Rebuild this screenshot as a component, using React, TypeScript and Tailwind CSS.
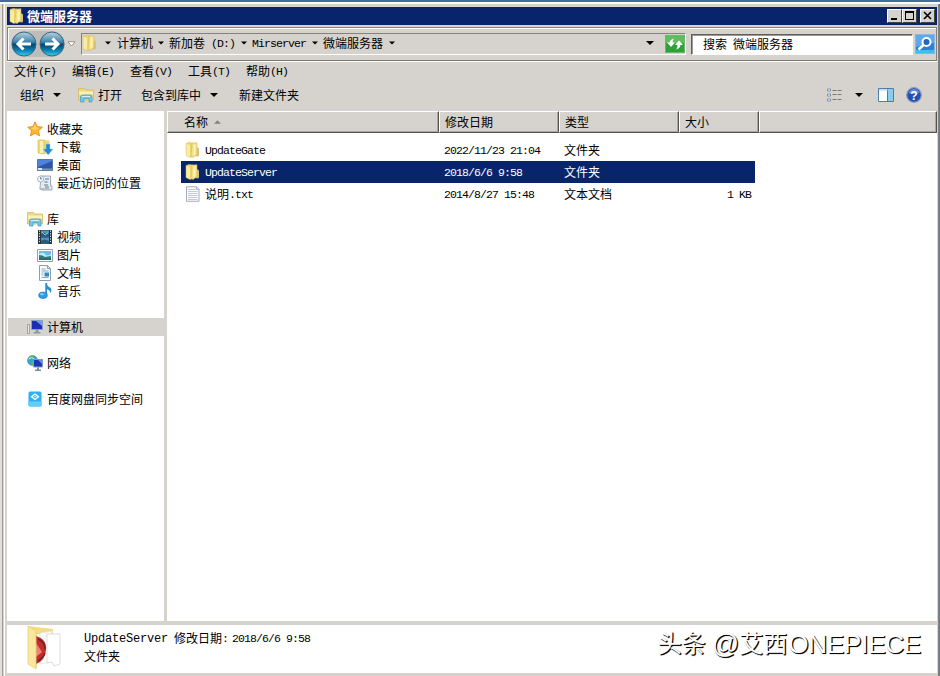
import { ReactNode } from "react";

// CJK glyphs sit on a 12px cell, latin ones on a 6px cell (7px when wide)
function T({ children, className = "", wide = false }: { children: string; className?: string; wide?: boolean }) {
  const parts = children.split(/([\x20-\x7e]+)/).filter(Boolean);
  return (
    <span className={"inline-flex items-center whitespace-pre leading-none " + className}>
      {parts.map((p, i) =>
        /^[\x20-\x7e]/.test(p) ? (
          <span key={i} className={"pt-[2px] font-['Liberation_Mono',monospace] leading-[12px] " + (wide ? "text-[12px] tracking-[-0.2px]" : "text-[11.5px] tracking-[-0.9px]")}>{p}</span>
        ) : (
          <span key={i} className="font-['Noto_Sans_CJK_SC',sans-serif] text-[12px] leading-[12px]">{p}</span>
        )
      )}
    </span>
  );
}

function Caret({ className = "", size = 7 }: { className?: string; size?: number }) {
  return (
    <svg width={size} height="4" viewBox="0 0 8 4" className={"shrink-0 " + className}>
      <path d="M0 0h8L4 4z" fill="currentColor" />
    </svg>
  );
}

const svg = (children: ReactNode, size = 16) => (
  <svg width={size} height={size} viewBox="0 0 16 16" className="shrink-0">{children}</svg>
);

const FolderIcon = () =>
  svg(
    <>
      <path d="M1 1.500L4 .5l4 .5v13.500l-3 1-4-2z" fill="#ecd46f" stroke="#dcc169" strokeWidth=".5" />
      <path d="M1.500 2L5 3v12l-3.500-1.500z" fill="#f9eda6" />
      <path d="M7 1l5-.3v12L8 15.500 6 14.500z" fill="#f2df80" stroke="#d3b755" strokeWidth=".5" />
      <path d="M8.500 2.500h2v10l-2 1.500z" fill="#fbf3b9" />
      <path d="M12 5l2 1.500v7l-1 1-3-.5 2-2z" fill="#d8c07a" />
    </>
  );

const LibraryIcon = () =>
  svg(
    <>
      <path d="M.5 3V1.500h6L8 3h7.500v10H.5z" fill="#eed980" stroke="#cdb561" strokeWidth=".7" />
      <path d="M1 4.500h14v3H1z" fill="#fcf2b8" />
      <path d="M2.500 15V9.500Q3 8 5 8h7q2 0 2 2v5h-3v-3.500H6V15z" fill="#73c6ea" stroke="#3f9ec8" strokeWidth=".7" />
      <path d="M4 9.500h8" stroke="#d1f1fc" />
    </>
  );

const StarIcon = () =>
  svg(
    <>
      <path d="M8 .8l2.200 4.800 5.200.6-3.900 3.500 1 5.200L8 12.300l-4.600 2.600 1.100-5.200L.7 6.200l5.100-.6z" fill="#ffb52e" stroke="#e88a2a" strokeWidth=".9" />
      <path d="M8 3l1.500 3.500 3 .5-4.500 2-4.500-2 3-.5z" fill="#ffd56a" />
    </>
  );

const DownloadIcon = () =>
  svg(
    <>
      <path d="M1 1h7v14l-7-1z" fill="#f0d97a" stroke="#d3b755" strokeWidth=".6" />
      <path d="M3 2h3v12H3z" fill="#fbf1b0" />
      <path d="M8 1.500h4.500V13H8z" fill="#ead584" />
      <path d="M9 5h4v5h3l-4.800 6L6 10h3z" fill="#2488cf" stroke="#9bd0f2" strokeWidth=".5" />
    </>
  );

const DesktopIcon = () =>
  svg(
    <>
      <path d="M.5 2.500h15v11H.5z" fill="#2b55b0" stroke="#5f7795" />
      <path d="M1 3h14v1L1 10z" fill="#4f83d8" />
      <path d="M1 11.500h14V13H1z" fill="#7f99b3" />
      <path d="M1 11h4v2H1z" fill="#d6edf5" />
    </>
  );

const RecentIcon = () =>
  svg(
    <>
      <path d="M4 1h9.500v10H15v4H4.500L3 13z" fill="#e3ebf2" stroke="#8798a6" strokeWidth=".8" />
      <path d="M8 4h4M7 10h4M8 12h4" stroke="#66798b" />
      <path d="M7.500 6h3v2h-3z" fill="#9aacbd" />
      <circle cx="3.600" cy="4" r="3.100" fill="#f4f7fa" stroke="#98a6b3" strokeWidth=".8" />
      <path d="M3.600 2v2H5" fill="none" stroke="#536879" strokeWidth=".8" />
      <path d="M2 13h10l1 2H3z" fill="#b2bcc5" />
    </>
  );

const VideoIcon = () =>
  svg(
    <>
      <path d="M1 1h14v14H1z" fill="#26343e" />
      <path d="M4 1.500h8v6H4zM4 8.500h8v6H4z" fill="#4a98cf" />
      <path d="M4 5q3-3 5 0l3-1v3.500H4zM4 12q3-3 8 0v2.500H4z" fill="#245c7c" />
      <path d="M5 3l3 3 3-2" stroke="#a8c7a0" fill="none" />
      <path d="M2.500 1.500v13M13.500 1.500v13" stroke="#dce5eb" strokeDasharray="1.300 1.300" />
    </>
  );

const PictureIcon = () =>
  svg(
    <>
      <path d="M.5 2.500h15v12H.5z" fill="#fff" stroke="#8ca1b1" />
      <path d="M2 4h12v9H2z" fill="#67bce7" />
      <path d="M2 7q4-3 6 0t6 0v3H2z" fill="#c4ebec" />
      <path d="M2 8q4 0 6 2l6-1v3.500H2z" fill="#287d83" />
      <path d="M2 11.500h12V13H2z" fill="#1d62a5" />
    </>
  );

const DocIcon = () =>
  svg(
    <>
      <path d="M2.500.5h8l3 3v12h-11z" fill="#f8fbfe" stroke="#8b9caf" />
      <path d="M10.500.5v3h3" fill="none" stroke="#8b9caf" />
      <path d="M4.500 4h4M4.500 6h7M4.500 8h2M4.500 10h2M4.500 12.500h7" stroke="#8fa7bd" />
      <path d="M7.500 7.500h4.500v4H7.500z" fill="#3587bd" />
    </>
  );

const MusicIcon = () =>
  svg(
    <>
      <path d="M8.300 0h1.700q0 3 3 4.500 2.500 1.800.5 5.500-.5-3-3.500-3.700V12H8.300z" fill="#278fd5" />
      <ellipse cx="6" cy="12.300" rx="4.300" ry="3.200" fill="#2f9be0" stroke="#1876b5" strokeWidth=".6" />
      <ellipse cx="5" cy="11.300" rx="2" ry="1" fill="#8dd0f5" />
    </>
  );

const ComputerIcon = () =>
  svg(
    <>
      <path d="M.5 5.500h2v9h-2z" fill="#e5e7e8" stroke="#8d9499" strokeWidth=".8" />
      <path d="M4.500 1.500h11v9h-11z" fill="#1c2fb4" stroke="#8ba0be" />
      <path d="M9 2h6v5z" fill="#6e9bf1" />
      <path d="M8.500 11h3v2h2v1.500h-7V13h2z" fill="#8a97a5" />
    </>
  );

const NetworkIcon = () =>
  svg(
    <>
      <circle cx="5.500" cy="5.500" r="5" fill="#36a1cf" stroke="#237aa3" strokeWidth=".5" />
      <path d="M2 2q3-2 5-1L5 4 2 6zM4 7h3v3L5 10z" fill="#5cb957" />
      <path d="M1.500 4q3-3 6 0" stroke="#c4efff" fill="none" />
      <path d="M6.500 4.500h9v7.500h-9z" fill="#1c35b5" stroke="#819bbd" />
      <path d="M11 5h4v4z" fill="#638ceb" />
      <path d="M10 12.500h2v2h2V16H8v-1.500h2z" fill="#7f8c9a" />
    </>
  );

const BaiduIcon = () =>
  svg(
    <>
      <rect x="1.500" y=".5" width="13" height="15" rx="1.500" fill="#2fb0f1" />
      <path d="M1.500 10.500h13V14q0 1.500-1.500 1.500H3q-1.500 0-1.500-1.500z" fill="#62cdf8" />
      <path d="M8 3l3.500 2.700L8 8.500 4.500 5.700z" fill="none" stroke="#fff" strokeWidth="1.300" />
      <path d="M6.800 5.700h2.400" stroke="#d2f2ff" />
    </>
  );

const TextFileIcon = () =>
  svg(
    <>
      <path d="M1.500.8h10l2.500 2.500v12H1.500z" fill="#fafbfd" stroke="#9ba1b3" strokeWidth=".9" />
      <path d="M3 3.500h8M3 5.500h9.500M3 7.500h9.500M3 9.500h9.500M3 11.500h9.500M3 13.500h9.500" stroke="#b4bdd0" strokeWidth=".8" />
      <path d="M11.500.8v2.500H14" fill="none" stroke="#9ba1b3" strokeWidth=".8" />
    </>
  );

function NavButton({ flip = false }: { flip?: boolean }) {
  return (
    <svg width="26" height="26" viewBox="0 0 26 26" className={"shrink-0 " + (flip ? "-scale-x-100" : "")}>
      <defs>
        <linearGradient id="orb" x2="0" y2="1">
          <stop offset="0" stopColor="#b9d2de" />
          <stop offset=".42" stopColor="#3c86ac" />
          <stop offset=".52" stopColor="#06476f" />
          <stop offset=".75" stopColor="#087db0" />
          <stop offset="1" stopColor="#37d2f5" />
        </linearGradient>
      </defs>
      <circle cx="13" cy="13" r="12" fill="url(#orb)" stroke="#3d6580" strokeWidth="1" />
      <path d="M12.500 7.500L7 13l5.500 5.500M7.500 13H20" fill="none" stroke="#fff" strokeWidth="3" />
    </svg>
  );
}

const tree = [
  { label: "收藏夹", icon: StarIcon, root: true },
  { label: "下载", icon: DownloadIcon },
  { label: "桌面", icon: DesktopIcon },
  { label: "最近访问的位置", icon: RecentIcon },
  null,
  { label: "库", icon: LibraryIcon, root: true },
  { label: "视频", icon: VideoIcon },
  { label: "图片", icon: PictureIcon },
  { label: "文档", icon: DocIcon },
  { label: "音乐", icon: MusicIcon },
  null,
  { label: "计算机", icon: ComputerIcon, root: true, active: true },
  null,
  { label: "网络", icon: NetworkIcon, root: true },
  null,
  { label: "百度网盘同步空间", icon: BaiduIcon, root: true },
];

const files = [
  { name: "UpdateGate", date: "2022/11/23 21:04", type: "文件夹", size: "", icon: FolderIcon },
  { name: "UpdateServer", date: "2018/6/6 9:58", type: "文件夹", size: "", icon: FolderIcon, selected: true },
  { name: "说明.txt", date: "2014/8/27 15:48", type: "文本文档", size: "1 KB", icon: TextFileIcon },
];

const columns = [
  { label: "名称", cls: "w-[272px] pl-[16px]", sorted: true },
  { label: "修改日期", cls: "w-[120px] pl-[5px]" },
  { label: "类型", cls: "w-[120px] pl-[5px]" },
  { label: "大小", cls: "w-[80px] pl-[5px]" },
  { label: "", cls: "flex-1" },
];

const menus = ["文件(F)", "编辑(E)", "查看(V)", "工具(T)", "帮助(H)"];

const captionBtn = "flex h-[14px] w-[15px] items-center justify-center border border-t-white border-l-white border-r-[#404040] border-b-[#404040] bg-[#d6d3ce] text-black";

function TitleBar() {
  return (
    <div className="flex h-[18px] items-center bg-[#08246b] pl-[2px] pr-[2px]">
      <FolderIcon />
      <T className="ml-[2px] flex-1 font-bold text-white [&>span]:text-[13px]">微端服务器</T>
      <div className={captionBtn}>
        <svg width="11" height="10"><path d="M2 7h6v2H2z" /></svg>
      </div>
      <div className={captionBtn + " mr-[3px]"}>
        <svg width="11" height="10"><path d="M1 0h9v9H1zM2 2v6h7V2z" fillRule="evenodd" /></svg>
      </div>
      <div className={captionBtn}>
        <svg width="11" height="10"><path d="M2 1l7 7M9 1L2 8" stroke="#000" strokeWidth="1.600" /></svg>
      </div>
    </div>
  );
}

function AddressRow() {
  return (
    <div className="mt-[2px] flex h-[34px] items-center border border-[#85827e] border-b-[#77746f] pl-[3px] shadow-[inset_1px_1px_0_#fff,0_1px_0_#fff]">
      <div className="flex gap-[2px] rounded-full bg-[#bebcb8]">
        <NavButton />
        <NavButton flip />
      </div>
      <svg width="9" height="6" viewBox="0 0 9 6" className="ml-[2px] shrink-0">
        <path d="M1 .7h7L4.500 5z" fill="#fff" stroke="#85827e" strokeWidth=".8" />
      </svg>
      <div className="ml-[5px] flex h-[22px] w-[605px] items-center border border-t-[#85827e] border-l-[#85827e] border-r-white border-b-white pb-[2px] text-black">
        <FolderIcon />
        <Caret size={6} className="ml-[7px] mr-[6px]" />
        <T>计算机</T>
        <Caret size={6} className="ml-[5px] mr-[5px]" />
        <T>新加卷 (D:)</T>
        <Caret size={6} className="ml-[6px] mr-[5px]" />
        <T>Mirserver</T>
        <Caret size={6} className="ml-[6px] mr-[5px]" />
        <T>微端服务器</T>
        <Caret size={6} className="ml-[6px]" />
        <div className="flex-1" />
        <Caret size={8} className="mr-[11px]" />
        <svg width="20" height="18" viewBox="0 0 20 18" className="mt-[2px] shrink-0">
          <rect x=".5" y=".5" width="19" height="17" fill="#2ea239" stroke="#6ab86d" />
          <path d="M1 1h18v7H1z" fill="#5fbd61" />
          <path d="M2 7.500h2.500Q5 4.500 9 3.500 7.500 5 7.500 7.500H10L6 12z" fill="#fff" />
          <path d="M18 10h-2.500q-.5 3.500-4.500 4.500 1.500-1.500 1.500-4.500H10L14 5.500z" fill="#fff" />
        </svg>
      </div>
      <div className="ml-[5px] flex h-[21px] w-[222px] items-center border border-t-[#625f5b] border-l-[#625f5b] border-r-white border-b-white bg-white pl-[11px] shadow-[inset_1px_1px_0_#999]">
        <T>搜索 微端服务器</T>
      </div>
      <svg width="20" height="20" viewBox="0 0 20 20" className="ml-[2px] shrink-0">
        <rect x=".5" y=".5" width="19" height="19" fill="#2e7fd8" stroke="#8bb5dd" />
        <path d="M1 1h18v8L1 13z" fill="#5caaec" />
        <path d="M1 16h18v3H1z" fill="#3dbdf0" />
        <circle cx="11.500" cy="8" r="4" fill="#2265bd" stroke="#fff" strokeWidth="2" />
        <path d="M8.500 11l-5 4.500" stroke="#fff" strokeWidth="2.500" />
      </svg>
    </div>
  );
}

function Toolbar() {
  return (
    <div className="flex h-[27px] items-center pl-[13px] pr-[15px] text-black">
      <T>组织</T>
      <Caret size={8} className="ml-[9px]" />
      <div className="ml-[17px] flex items-center gap-[4px]">
        <LibraryIcon />
        <T>打开</T>
      </div>
      <T className="ml-[19px]">包含到库中</T>
      <Caret size={8} className="ml-[9px]" />
      <T className="ml-[21px]">新建文件夹</T>
      <div className="flex-1" />
      <svg width="16" height="14" viewBox="0 0 16 14">
        <path d="M.5 1h3v2h-3zM.5 6h3v2h-3zM.5 11h3v2h-3z" fill="#fff" stroke="#7189ac" strokeWidth=".9" />
        <path d="M5.500 2.500h10M5.500 6.500h10M5.500 11.500h10" stroke="#77787a" strokeDasharray="4 1" />
      </svg>
      <Caret size={8} className="ml-[12px]" />
      <svg width="16" height="14" viewBox="0 0 16 14" className="ml-[15px]">
        <path d="M.5.5h15v13H.5z" fill="#fff" stroke="#4c7ca8" />
        <path d="M10 1h5v12h-5z" fill="#8acbf0" />
        <path d="M9.500 1v12" stroke="#4c7ca8" />
        <path d="M1 2h14" stroke="#9fc5e0" />
      </svg>
      <svg width="16" height="16" viewBox="0 0 16 16" className="ml-[12px]">
        <circle cx="8" cy="8" r="7.300" fill="#2450ae" stroke="#8798bd" strokeWidth="1.200" />
        <path d="M2.500 6Q4 2 8 2t5.500 4Q8 8 2.500 6z" fill="#638bd5" />
        <text x="8" y="12.500" textAnchor="middle" fontSize="12" fontWeight="bold" fill="#fff" fontFamily="Liberation Sans, sans-serif">?</text>
      </svg>
    </div>
  );
}

function Sidebar() {
  return (
    <div className="w-[157px] shrink-0 bg-white pt-[9px] pl-px">
      {tree.map((item, i) => {
        if (!item) return <div key={i} className="h-[18px]" />;
        const Icon = item.icon;
        return (
          <div key={i} className={"flex h-[18px] items-center gap-[4px] " + (item.root ? "pl-[19px] " : "pl-[29px] ") + (item.active ? "bg-[#d6d3ce]" : "")}>
            <Icon />
            <T>{item.label}</T>
          </div>
        );
      })}
    </div>
  );
}

function FileList() {
  return (
    <div className="flex flex-1 flex-col bg-white">
      <div className="flex h-[22px]">
        {columns.map(({ label, cls, sorted }) => (
          <div key={label} className={"flex items-center border border-t-white border-l-white border-r-[#55524e] border-b-[#55524e] bg-[#d6d3ce] shadow-[inset_-1px_-1px_0_#aaa7a2] " + cls}>
            <T>{label}</T>
            {sorted && <Caret size={7} className="ml-[6px] rotate-180 text-[#85827e]" />}
          </div>
        ))}
      </div>
      <div className="ml-[14px] mt-[6px] w-[574px]">
        {files.map(({ name, date, type, size, icon: Icon, selected }) => (
          <div key={name} className={"flex h-[22px] items-center pl-[4px] " + (selected ? "bg-[#08246b] text-white" : "text-black")}>
            <div className="flex w-[259px] items-center gap-[4px]">
              <Icon />
              <T>{name}</T>
            </div>
            <T className="w-[120px]">{date}</T>
            <T className="w-[120px]">{type}</T>
            <T className="flex-1 justify-end pr-[4px]">{size}</T>
          </div>
        ))}
      </div>
    </div>
  );
}

function Details() {
  return (
    <div className="flex h-[48px] items-start bg-white pr-[16px]">
      <svg width="36" height="46" viewBox="0 0 36 46" className="ml-[20px]">
        <path d="M1 1l25 3v6L10 9v34L1 39z" fill="#f3dc83" />
        <path d="M13 8l12-2v31l-12 2z" fill="#fafafa" stroke="#ddd" strokeWidth=".6" />
        <path d="M20 9l13 0v30l-6 2-2-4-5 1z" fill="#fff" stroke="#d5d5d5" strokeWidth=".8" />
        <path d="M9 11q11 3 10 14T9 39z" fill="#c92c2b" />
        <path d="M11 14q7 3 7 10M11 36q5-3 7-8" fill="none" stroke="#6b2824" strokeWidth="1.600" />
        <path d="M9 18l6 9-6 5z" fill="#eb8377" />
        <path d="M1 1l8 5v38l-8-5z" fill="#f8e79c" stroke="#e5d184" strokeWidth=".8" />
      </svg>
      <div className="ml-[21px] mt-[7px] flex flex-1 flex-col gap-[6px]">
        <div className="flex h-[12px] items-center">
          <T wide>UpdateServer</T>
          <T className="ml-[6px]">修改日期:</T>
          <T className="ml-[4px]">2018/6/6 9:58</T>
        </div>
        <T>文件夹</T>
      </div>
      <div className="flex items-center whitespace-nowrap font-['Liberation_Sans','Noto_Sans_CJK_SC',sans-serif] text-[24px] leading-[38px] text-white [text-shadow:1px_1px_1px_#000,1px_1px_0_#222]">
        <span>头条</span>
        <span className="ml-[6px] text-[27px]">@</span>
        <span>艾西</span>
        <span className="ml-px text-[26px] tracking-[-0.2px]">ONEPIECE</span>
      </div>
    </div>
  );
}

export default function App() {
  return (
    <div className="flex h-[676px] w-[940px] flex-col overflow-hidden bg-[#d6d3ce] text-black">
      <div className="h-[2px] shrink-0 bg-[#426f99]" />
      <div className="h-[2px] shrink-0 bg-white" />
      <div className="flex min-h-0 flex-1">
        <div className="w-[2px] bg-[#e2dfdb]" />
        <div className="w-px bg-[#a39a94]" />
        <div className="w-px bg-[#d6d3ce]" />
        <div className="w-px bg-white" />
        <div className="w-[2px] bg-[#d6d3ce]" />
        <div className="flex w-[930px] flex-col pt-[3px]">
          <TitleBar />
          <AddressRow />
          <div className="flex h-[20px] items-center pl-[7px]">
            {menus.map((label) => (
              <T key={label} className="w-[58px]">{label}</T>
            ))}
          </div>
          <Toolbar />
          <div className="mt-[3px] flex min-h-0 flex-1">
            <Sidebar />
            <div className="w-[3px] bg-[#d6d3ce]" />
            <FileList />
          </div>
          <div className="h-[4px] shrink-0" />
          <Details />
          <div className="h-[3px] shrink-0" />
        </div>
        <div className="w-px bg-[#d6d3ce]" />
        <div className="w-px bg-[#85827e]" />
        <div className="w-px bg-[#5580a8]" />
      </div>
    </div>
  );
}
